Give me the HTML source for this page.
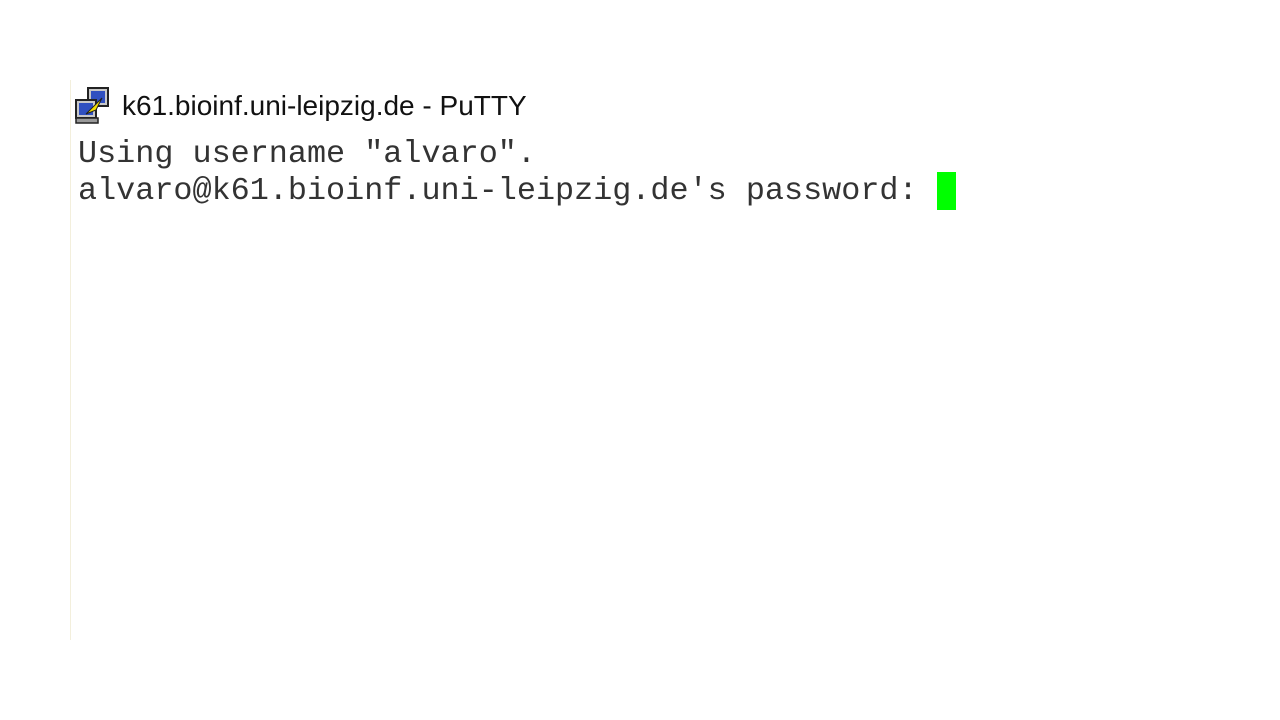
<!DOCTYPE html>
<html><head><meta charset="utf-8"><style>
html,body{margin:0;padding:0;background:#fff;width:1280px;height:720px;overflow:hidden;position:relative}
.line{position:absolute;left:70px;top:80px;width:1px;height:560px;background:#f3efdc}
.title{position:absolute;left:122px;top:90px;font:28px "Liberation Sans",sans-serif;color:#111;white-space:nowrap;letter-spacing:0px}
.t{position:absolute;left:78px;font:31.8px "Liberation Mono",monospace;color:#333;white-space:pre;line-height:37px}
.cur{position:absolute;left:937px;top:172px;width:19px;height:38px;background:#00ff00}
</style></head><body>
<div class="line"></div>
<svg style="position:absolute;left:74px;top:86px" width="40" height="40" viewBox="0 0 40 40">
<rect x="14" y="2" width="20" height="18" fill="#c8c8c8" stroke="#222" stroke-width="2"/>
<rect x="17" y="5" width="14" height="12" fill="#3050c0"/>
<rect x="2" y="14" width="20" height="18" fill="#c8c8c8" stroke="#222" stroke-width="2"/>
<rect x="5" y="17" width="14" height="12" fill="#3050c0"/>
<rect x="2" y="32" width="22" height="5" fill="#999" stroke="#222" stroke-width="1.5"/>
<path d="M28 12 L18 22 L12 28 L22 24 Z" fill="#f5e000" stroke="#222" stroke-width="1"/>
</svg>
<div class="title">k61.bioinf.uni-leipzig.de - PuTTY</div>
<div class="t" style="top:136px">Using username "alvaro".</div>
<div class="t" style="top:173px">alvaro@k61.bioinf.uni-leipzig.de's password: </div>
<div class="cur"></div>
</body></html>
